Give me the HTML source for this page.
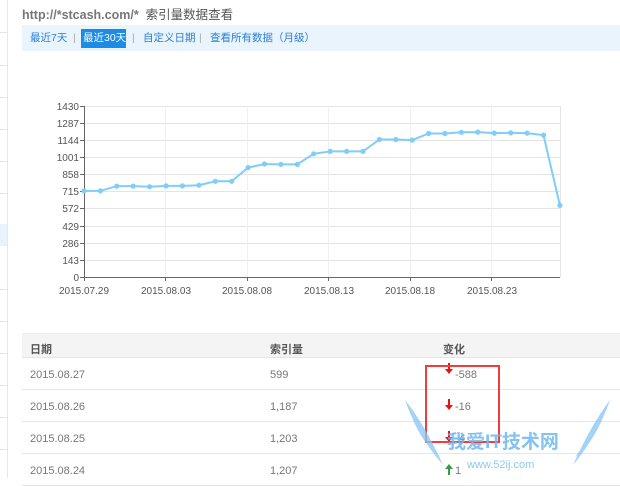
<!DOCTYPE html>
<html><head><meta charset="utf-8"><style>
*{margin:0;padding:0;box-sizing:border-box}
body{width:620px;height:478px;overflow:hidden;background:#fff;font-family:"Liberation Sans","Noto Sans CJK SC",sans-serif;position:relative}
.side{position:absolute;left:0;top:0;width:8px;height:478px;border-right:1px solid #e8e8e8}
.side i{position:absolute;left:0;width:8px;border-top:1px solid #e6e6e6}
.title{position:absolute;left:22px;top:4px;font-size:12.5px;color:#555}
.title b{font-weight:bold;color:#777}
.nav{position:absolute;left:22px;top:25px;width:598px;height:26px;background:#eaf4fd;font-size:10.5px;color:#2a7fd4;white-space:nowrap}
.nav span{position:absolute;top:7px;line-height:13px}
.nav .sep{color:#aaa}
.nav .act{left:59px;top:4px;background:#1a8be6;color:#fff;padding:3px 2px;width:45px;height:19px}
.tbl{position:absolute;left:22px;top:333px;width:598px}
.hd{height:25px;background:#f4f4f4;border-top:1px solid #eee;border-bottom:1px solid #e4e4e4;font-size:11px;font-weight:bold;color:#555;position:relative}
.row{height:32px;border-bottom:1px solid #e6e6e6;position:relative;font-size:11px;color:#777}
.c1,.c2,.c3{position:absolute}
.c1{left:8px}.c2{left:248px}.c3{left:433px}
.hd span{top:7px}.row span{top:11px}
.row svg{position:absolute;left:422px;top:5px}
</style></head><body>
<div class="side"><i style="top:32px"></i><i style="top:65px"></i><i style="top:97px"></i><i style="top:129px"></i><i style="top:161px"></i><i style="top:193px"></i><div style="position:absolute;top:224px;width:7px;height:22px;background:#e8f2fc"></div><i style="top:289px"></i><i style="top:321px"></i><i style="top:353px"></i><i style="top:385px"></i><i style="top:417px"></i><i style="top:449px"></i></div>
<div class="title"><b>http://*stcash.com/*</b>&nbsp; 索引量数据查看</div>
<div class="nav">
<span style="left:8px">最近7天</span><span class="sep" style="left:51px">|</span>
<span class="act">最近30天</span><span class="sep" style="left:110px">|</span>
<span style="left:121px">自定义日期</span><span class="sep" style="left:177px">|</span>
<span style="left:188px">查看所有数据（月级）</span>
</div>
<svg style="position:absolute;left:0;top:0" width="620" height="320" font-family="Liberation Sans, sans-serif" font-size="10" fill="#555">
<g stroke="#e4e4e4" stroke-width="1">
<line x1="84" x2="560" y1="106.5" y2="106.5"/><line x1="84" x2="560" y1="123.5" y2="123.5"/><line x1="84" x2="560" y1="140.5" y2="140.5"/><line x1="84" x2="560" y1="157.5" y2="157.5"/><line x1="84" x2="560" y1="174.5" y2="174.5"/><line x1="84" x2="560" y1="191.5" y2="191.5"/><line x1="84" x2="560" y1="208.5" y2="208.5"/><line x1="84" x2="560" y1="226.5" y2="226.5"/><line x1="84" x2="560" y1="243.5" y2="243.5"/><line x1="84" x2="560" y1="260.5" y2="260.5"/>
<line x1="165.5" x2="165.5" y1="106" y2="277" stroke="#f0f0f0"/><line x1="247.5" x2="247.5" y1="106" y2="277" stroke="#f0f0f0"/><line x1="328.5" x2="328.5" y1="106" y2="277" stroke="#f0f0f0"/><line x1="410.5" x2="410.5" y1="106" y2="277" stroke="#f0f0f0"/><line x1="491.5" x2="491.5" y1="106" y2="277" stroke="#f0f0f0"/>
<line x1="560.5" x2="560.5" y1="106" y2="277"/>
</g>
<g stroke="#666" stroke-width="1">
<line x1="84.5" x2="84.5" y1="106" y2="281"/><line x1="80" x2="560" y1="277.5" y2="277.5"/>
<line x1="80" x2="84" y1="106.5" y2="106.5"/><line x1="80" x2="84" y1="123.5" y2="123.5"/><line x1="80" x2="84" y1="140.5" y2="140.5"/><line x1="80" x2="84" y1="157.5" y2="157.5"/><line x1="80" x2="84" y1="174.5" y2="174.5"/><line x1="80" x2="84" y1="191.5" y2="191.5"/><line x1="80" x2="84" y1="208.5" y2="208.5"/><line x1="80" x2="84" y1="226.5" y2="226.5"/><line x1="80" x2="84" y1="243.5" y2="243.5"/><line x1="80" x2="84" y1="260.5" y2="260.5"/>
<line x1="165.5" x2="165.5" y1="277" y2="281"/><line x1="247.5" x2="247.5" y1="277" y2="281"/><line x1="328.5" x2="328.5" y1="277" y2="281"/><line x1="410.5" x2="410.5" y1="277" y2="281"/><line x1="491.5" x2="491.5" y1="277" y2="281"/>
</g>
<g text-anchor="end">
<text x="79" y="110">1430</text><text x="79" y="127">1287</text><text x="79" y="144">1144</text><text x="79" y="161">1001</text><text x="79" y="178">858</text><text x="79" y="195">715</text><text x="79" y="212">572</text><text x="79" y="230">429</text><text x="79" y="247">286</text><text x="79" y="264">143</text><text x="79" y="281">0</text>
</g>
<g text-anchor="middle">
<text x="84" y="294">2015.07.29</text><text x="166" y="294">2015.08.03</text><text x="247" y="294">2015.08.08</text><text x="329" y="294">2015.08.13</text><text x="410" y="294">2015.08.18</text><text x="492" y="294">2015.08.23</text>
</g>
<polyline fill="none" stroke="#7fcef8" stroke-width="2" points="84,190.9 100.4,190.9 116.8,186.1 133.2,186.1 149.6,186.7 166.1,185.9 182.5,185.9 198.9,185.2 215.3,181.3 231.7,181.3 248.1,167.6 264.5,164 280.9,164.4 297.3,164.4 313.7,153.8 330.2,151.4 346.6,151.4 363,151.4 379.4,139.5 395.8,139.5 412.2,140.1 428.6,133.5 445,133.5 461.4,132.3 477.8,132.1 494.3,133.1 510.7,132.9 527.1,133.1 543.5,135.1 559.9,205.4"/>
<g fill="#7fcef8">
<circle cx="84" cy="190.9" r="2.6"/><circle cx="100.4" cy="190.9" r="2.6"/><circle cx="116.8" cy="186.1" r="2.6"/><circle cx="133.2" cy="186.1" r="2.6"/><circle cx="149.6" cy="186.7" r="2.6"/><circle cx="166.1" cy="185.9" r="2.6"/><circle cx="182.5" cy="185.9" r="2.6"/><circle cx="198.9" cy="185.2" r="2.6"/><circle cx="215.3" cy="181.3" r="2.6"/><circle cx="231.7" cy="181.3" r="2.6"/><circle cx="248.1" cy="167.6" r="2.6"/><circle cx="264.5" cy="164" r="2.6"/><circle cx="280.9" cy="164.4" r="2.6"/><circle cx="297.3" cy="164.4" r="2.6"/><circle cx="313.7" cy="153.8" r="2.6"/><circle cx="330.2" cy="151.4" r="2.6"/><circle cx="346.6" cy="151.4" r="2.6"/><circle cx="363" cy="151.4" r="2.6"/><circle cx="379.4" cy="139.5" r="2.6"/><circle cx="395.8" cy="139.5" r="2.6"/><circle cx="412.2" cy="140.1" r="2.6"/><circle cx="428.6" cy="133.5" r="2.6"/><circle cx="445" cy="133.5" r="2.6"/><circle cx="461.4" cy="132.3" r="2.6"/><circle cx="477.8" cy="132.1" r="2.6"/><circle cx="494.3" cy="133.1" r="2.6"/><circle cx="510.7" cy="132.9" r="2.6"/><circle cx="527.1" cy="133.1" r="2.6"/><circle cx="543.5" cy="135.1" r="2.6"/><circle cx="559.9" cy="205.4" r="2.6"/>
</g>
</svg>
<div class="tbl">
<div class="hd"><span class="c1">日期</span><span class="c2">索引量</span><span class="c3" style="left:421px">变化</span></div>
<div class="row"><span class="c1">2015.08.27</span><span class="c2">599</span><svg width="10" height="12"><path d="M5 0V8" stroke="#e11" stroke-width="2"/><path d="M1 6L5 11L9 6Z" fill="#e11"/></svg><span class="c3">-588</span></div>
<div class="row"><span class="c1">2015.08.26</span><span class="c2">1,187</span><svg width="10" height="12" style="top:9px"><path d="M5 0V8" stroke="#e11" stroke-width="2"/><path d="M1 6L5 11L9 6Z" fill="#e11"/></svg><span class="c3">-16</span></div>
<div class="row"><span class="c1">2015.08.25</span><span class="c2">1,203</span><svg width="10" height="12" style="top:9px"><path d="M5 0V8" stroke="#e11" stroke-width="2"/><path d="M1 6L5 11L9 6Z" fill="#e11"/></svg><span class="c3">-4</span></div>
<div class="row"><span class="c1">2015.08.24</span><span class="c2">1,207</span><svg width="10" height="12" style="top:9px"><path d="M5 12V4" stroke="#3a9a4a" stroke-width="2"/><path d="M1 6L5 1L9 6Z" fill="#3a9a4a"/></svg><span class="c3">1</span></div>
</div>
<div style="position:absolute;left:425px;top:365px;width:75px;height:78px;border:2px solid #f03c3c"></div>
<svg style="position:absolute;left:395px;top:395px" width="225" height="83">
<path d="M10 5 Q22 40 48 70 Q30 30 10 5Z M16 20 Q28 50 45 62 Q28 40 16 20Z M215 5 Q203 40 178 70 Q196 30 215 5Z M209 20 Q197 50 180 62 Q197 40 209 20Z" fill="#8cc8f3" opacity="0.8"/>
<text x="52" y="53" font-size="19" font-weight="bold" fill="#6fb8f0" font-family="Liberation Sans, Noto Sans CJK SC, sans-serif" opacity="0.85">我爱IT技术网</text>
<text x="72" y="73" font-size="11" fill="#8cc8f3" font-family="Liberation Sans, sans-serif">www.52ij.com</text>
</svg>
</body></html>
